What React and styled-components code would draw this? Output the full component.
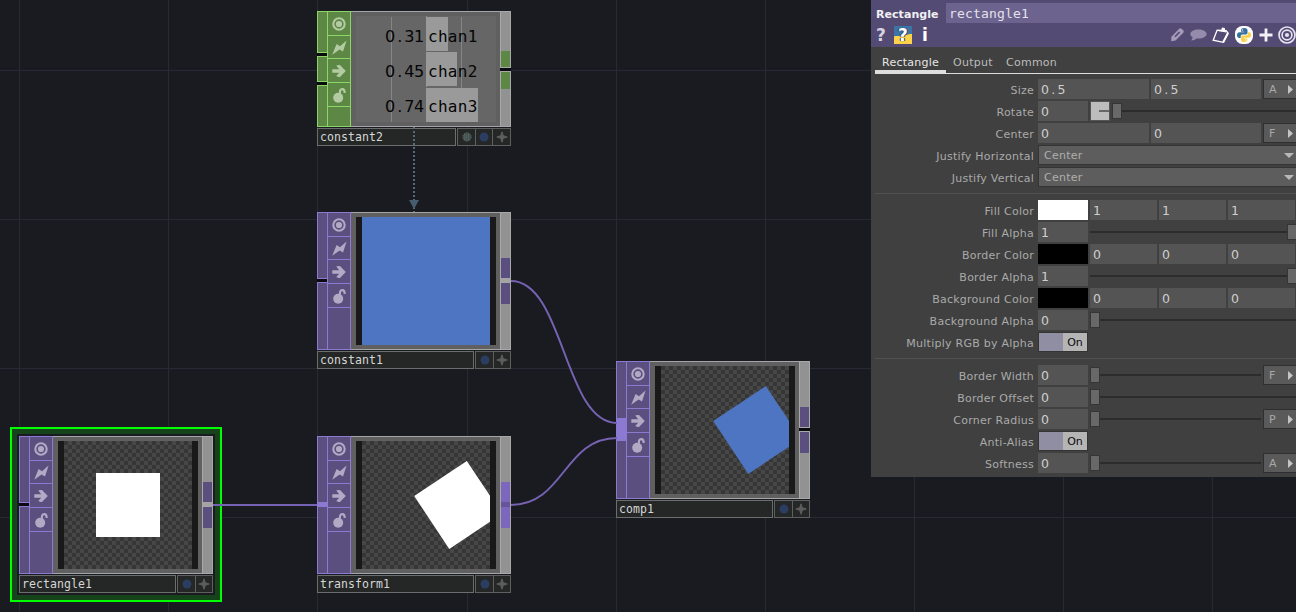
import React from "react";
import styled, { createGlobalStyle, css } from "styled-components";

const GlobalStyle = createGlobalStyle`
  *, *::before, *::after { box-sizing: border-box; }
  html, body { margin: 0; padding: 0; background: #191b20; overflow: hidden; }
`;

const SANS = '"DejaVu Sans", Verdana, sans-serif';
const MONO = '"DejaVu Sans Mono", "Lucida Console", monospace';

const families = {
  top: { fill: "#5b4f80", line: "#8c7ad2", glyph: "#b2a9c4", bright: "#7d66bd" },
  chop: { fill: "#5d8744", line: "#8cd666", glyph: "#b3cba2", bright: "#6fae4a" },
};

/* ---------- network canvas ---------- */

const Network = styled.main`
  position: relative;
  width: 1296px;
  height: 612px;
  overflow: hidden;
  background-color: #191b20;
`;

const Overlay = styled.svg`
  position: absolute;
  inset: 0;
  width: 1296px;
  height: 612px;
  pointer-events: none;
`;

const NodeFrame = styled.section`
  position: absolute;
  left: ${(p) => p.$x}px;
  top: ${(p) => p.$y}px;
  width: 194px;
  display: flex;
  flex-direction: column;
  gap: 1px;
`;

const SelectionFrame = styled.div`
  position: absolute;
  left: 10px;
  top: 427px;
  width: 212px;
  height: 175px;
  padding: 5px;
  border: 2px solid #00ff00;
  background: #15441b;
  background-clip: padding-box;
`;

const SelectionInner = styled.div`
  height: 100%;
  background: #191b20;
`;

const NodeBody = styled.div`
  display: grid;
  grid-template-columns: 10px 24px 149px 11px;
  height: ${(p) => p.$h}px;
`;

const InputStrip = styled.div`
  display: flex;
  flex-direction: column;
`;

const openBorders = { top: "1px 0 0 1px", bottom: "0 0 1px 1px" };

const InputPiece = styled.div`
  height: ${(p) => p.$h}px;
  background: ${(p) => (p.$hot ? p.$c.line : p.$c.fill)};
  border: solid ${(p) => p.$c.line};
  border-width: ${(p) => openBorders[p.$part] || "1px 0 1px 1px"};
`;

const Gap = styled.div`
  height: ${(p) => p.$h}px;
  background: #090a0e;
`;

const FlagColumn = styled.div`
  display: flex;
  flex-direction: column;
  background: ${(p) => p.$c.fill};
  border: 1px solid ${(p) => p.$c.line};
`;

const Flag = styled.div`
  display: flex;
  align-items: center;
  justify-content: center;
  height: ${(p) => p.$h}px;
  border-bottom: 1px solid ${(p) => p.$c.line};
  color: ${(p) => p.$c.glyph};
`;

const ViewerFrame = styled.div`
  padding: 4px 4px 4px 5px;
  background: #606060;
  border: solid #a5a5a5;
  border-width: 1px 0;
`;

const Viewer = styled.div`
  height: 100%;
  padding: 0 6px;
  background: #191919;
`;

const Picture = styled.div`
  width: 128px;
  height: 128px;
  background: ${(p) =>
    p.$solid || "repeating-conic-gradient(#474747 0 25%, #363636 0 50%) 0 0 / 8px 8px"};
`;

const OutputStrip = styled.div`
  display: flex;
  flex-direction: column;
  background: #929292;
  border: 1px solid #a8a8a8;
`;

const OutputPad = styled.div`
  height: ${(p) => p.$h}px;
  margin-top: ${(p) => p.$mt || 0}px;
  background: ${(p) => p.$bg};
`;

const OutputGap = styled.div`
  height: 5px;
  margin: 0 ${(p) => (p.$split ? "-1px" : "0")};
  background: ${(p) => p.$bg};
  ${(p) => p.$split && css`border: solid #a8a8a8; border-width: 1px 0;`}
`;

const NodeFooter = styled.footer`
  display: flex;
  gap: 1px;
  height: 18px;
`;

const NodeName = styled.div`
  flex: 1;
  border: 1px solid #6b6e6f;
  background: #242726;
  padding-left: 2px;
  color: #d6d6d6;
  font: 11.5px/16px ${MONO};
  letter-spacing: 0.08px;
`;

const FooterFlags = styled.div`
  display: flex;
  border: 1px solid #5d605f;
  background: #242726;
`;

const FooterFlag = styled.div`
  display: flex;
  align-items: center;
  justify-content: center;
  width: 17px;
  & + & { border-left: 1px solid #5d605f; }
  & + & + & { width: 18px; }
`;

/* ---------- channel viewer ---------- */

const Channels = styled.div`
  display: flex;
  flex-direction: column;
  height: 106px;
  padding-top: 1px;
  background:
    linear-gradient(#858585, #858585) 35px 1px / 1px 105px no-repeat,
    linear-gradient(#858585, #858585) 105px 1px / 1px 105px no-repeat,
    repeating-linear-gradient(#929292 0 2px, #696969 2px 3px) 70px 0 / 1px 106px no-repeat,
    #666;
`;

const Channel = styled.div`
  display: grid;
  grid-template-columns: 70px 70px;
  height: 35px;
  color: #050505;
`;

const ChannelValue = styled.span`
  padding-right: 2px;
  text-align: right;
  font: 16px/39px ${SANS};
  letter-spacing: -0.3px;
  white-space: nowrap;
`;

const ChannelName = styled.span`
  height: 35px;
  padding-left: 2px;
  font: 16px/39px ${MONO};
  letter-spacing: 0.3px;
  background: linear-gradient(#9a9a9a, #9a9a9a) 0 ${(p) => p.$top}px / ${(p) => p.$w}px 34px no-repeat;
`;

const Point = styled.span`
  padding: 0 2.3px;
`;

function Digits({ children }) {
  const [whole, frac] = children.split(".");
  return frac === undefined ? whole : (
    <>{whole}<Point>.</Point>{frac}</>
  );
}

/* ---------- glyphs ---------- */

const ViewerGlyph = () => (
  <svg width="14" height="14" viewBox="0 0 14 14" fill="none">
    <circle cx="7" cy="7" r="5.7" stroke="currentColor" strokeWidth="2.1" />
    <circle cx="7" cy="7" r="3.1" fill="currentColor" />
  </svg>
);

const BoltGlyph = () => (
  <svg width="15" height="15" viewBox="0 0 15 15">
    <path d="M.2 14.8 4.6 4 8 6.2 14.6.4 11 11.6 7.6 9.4Z" fill="currentColor" />
  </svg>
);

const ArrowGlyph = () => (
  <svg width="14" height="13" viewBox="0 0 14 13">
    <path d="M0.3 5.2H7.2L4.2 1.6 6.6 1H8L13.8 7 8 13H6.6L4.2 12.1 7.2 8.8H0.3Z" fill="currentColor" />
  </svg>
);

const LockGlyph = () => (
  <svg width="14" height="16" viewBox="0 0 14 16">
    <circle cx="6.2" cy="10.8" r="5" fill="currentColor" />
    <path d="M7.9 7.4V4.9C7.9 2.9 9 2.1 10.4 2.1S12.7 3.3 12.7 6.1" fill="none" stroke="currentColor" strokeWidth="2.1" />
  </svg>
);

const DotGlyph = () => (
  <svg width="10" height="10" viewBox="0 0 10 10">
    <circle cx="5" cy="5" r="4.5" fill="#2b3d60" />
  </svg>
);

const HatchGlyph = () => (
  <svg width="10" height="10" viewBox="0 0 10 10">
    <circle cx="5" cy="5" r="4.2" fill="#42504f" stroke="#5b696b" strokeDasharray="1 1" />
    <path d="M2 3H8M2 5H8M2 7H8" stroke="#65736b" strokeDasharray="1 1" />
  </svg>
);

const StarGlyph = () => (
  <svg width="12" height="12" viewBox="0 0 12 12">
    <path d="M6 .8 7.3 4.7 11.3 6 7.3 7.3 6 11.3 4.7 7.3.8 6 4.7 4.7Z" fill="#5d5d5d" stroke="#5d5d5d" />
  </svg>
);

/* ---------- nodes ---------- */

function Inputs({ kind, c }) {
  if (kind === "triple") {
    return (
      <InputStrip>
        <InputPiece $c={c} $h={42} /><Gap $h={3} />
        <InputPiece $c={c} $h={26} /><Gap $h={3} />
        <InputPiece $c={c} $h={42} />
      </InputStrip>
    );
  }
  if (kind === "split") {
    return (
      <InputStrip>
        <InputPiece $c={c} $h={67} /><Gap $h={3} />
        <InputPiece $c={c} $h={68} />
      </InputStrip>
    );
  }
  const [from, to] = kind === "wide" ? [57, 80] : [66, 71];
  return (
    <InputStrip>
      <InputPiece $c={c} $h={from} $part="top" />
      <InputPiece $c={c} $h={to - from} $hot />
      <InputPiece $c={c} $h={138 - to} $part="bottom" />
    </InputStrip>
  );
}

function Node({ x, y, name, family = "top", h = 138, inputs, output, hatch, children }) {
  const c = families[family];
  const small = h < 130;
  const padFill = output === "wired" ? c.bright : c.fill;
  const split = output === "split";
  const gapBg = split ? "#090a0e" : output === "wired" ? "#65549a" : "#a4a4a4";
  return (
    <NodeFrame $x={x} $y={y}>
      <NodeBody $h={h}>
        <Inputs kind={inputs} c={c} />
        <FlagColumn $c={c}>
          <Flag $c={c} $h={24}><ViewerGlyph /></Flag>
          <Flag $c={c} $h={23}><BoltGlyph /></Flag>
          <Flag $c={c} $h={24}><ArrowGlyph /></Flag>
          <Flag $c={c} $h={24}><LockGlyph /></Flag>
        </FlagColumn>
        <ViewerFrame>{children}</ViewerFrame>
        <OutputStrip>
          <OutputPad $mt={small ? 39 : 45} $h={small ? 16 : 20} $bg={padFill} />
          <OutputGap $split={split} $bg={gapBg} />
          <OutputPad $h={small ? 17 : 21} $bg={padFill} />
        </OutputStrip>
      </NodeBody>
      <NodeFooter>
        <NodeName>{name}</NodeName>
        <FooterFlags>
          {hatch && <FooterFlag><HatchGlyph /></FooterFlag>}
          <FooterFlag><DotGlyph /></FooterFlag>
          <FooterFlag><StarGlyph /></FooterFlag>
        </FooterFlags>
      </NodeFooter>
    </NodeFrame>
  );
}

const TiltedSquare = ({ fill }) => (
  <svg width="128" height="128" viewBox="0 0 128 128">
    <path d="M52.2 55 104.8 20 140 72.7 87.3 108Z" fill={fill} />
  </svg>
);

const PlainSquare = () => (
  <svg width="128" height="128" viewBox="0 0 128 128">
    <rect x="32" y="32" width="64" height="64" fill="#fff" />
  </svg>
);

const gridX = [19, 168, 317, 467, 616, 765, 914, 1063, 1212];
const gridY = [70, 219, 368, 517];

/* ---------- parameter panel ---------- */

const Panel = styled.aside`
  position: absolute;
  top: 0;
  right: 0;
  width: 425px;
  height: 477px;
  overflow: hidden;
  background: #404040;
  font-family: ${SANS};
  font-size: 11px;
  color: #aaa;
`;

const PanelHeader = styled.header`
  height: 47px;
  padding-top: 3px;
  background: #544b75;
`;

const TitleRow = styled.div`
  display: flex;
  height: 20px;
  line-height: 23px;
`;

const OpType = styled.div`
  width: 75px;
  padding-left: 5px;
  color: #f0f0f0;
  font-size: 11px;
  font-weight: bold;
  letter-spacing: 0.05px;
`;

const OpName = styled.div`
  flex: 1;
  padding-left: 3px;
  background: #6d638f;
  color: #e4e2ea;
  font: 13px/21px ${MONO};
  letter-spacing: 0.17px;
`;

const IconRow = styled.div`
  display: flex;
  align-items: center;
  justify-content: space-between;
  height: 24px;
  padding-left: 5px;
`;

const IconGroup = styled.div`
  display: flex;
  align-items: center;
  gap: ${(p) => p.$gap}px;
`;

const HelpMark = styled.span`
  width: 10px;
  color: ${(p) => p.$color};
  font: bold 17px/24px ${SANS};
  text-align: center;
`;

const PythonHelp = styled.span`
  display: flex;
  align-items: center;
  justify-content: center;
  width: 18px;
  height: 18px;
  background: linear-gradient(172deg, #3b74a5 0 50%, #fbd24a 52%);
  color: #fff;
  font: bold 17px/18px ${SANS};
  text-shadow: 0 0 1px #34405f, 1px 0 #34405f, -1px 0 #34405f;
`;

const Tabs = styled.nav`
  display: flex;
  height: 27px;
  margin-left: 4px;
  border-bottom: 1px solid #dedede;
`;

const Tab = styled.div`
  width: ${(p) => p.$w}px;
  height: 27px;
  padding-left: 7px;
  line-height: 31px;
  letter-spacing: 0.25px;
  color: ${(p) => (p.$active ? "#e6e6e6" : "#bcbcbc")};
  border-bottom: ${(p) => (p.$active ? "4px solid #dedede" : "0")};
`;

const Page = styled.div`
  display: flex;
  flex-direction: column;
  gap: 2px;
  padding-top: 5px;
`;

const Divider = styled.hr`
  width: 421px;
  height: 1px;
  margin: 4px 0 4px 4px;
  border: 0;
  background: #505050;
`;

const Row = styled.div`
  display: grid;
  grid-template-columns: 163px 1fr;
  column-gap: 4px;
  height: 20px;
`;

const Label = styled.div`
  height: 20px;
  text-align: right;
  line-height: 23px;
  letter-spacing: 0.25px;
  white-space: nowrap;
`;

const Controls = styled.div`
  display: flex;
  gap: 2px;
  height: 20px;
`;

const Field = styled.div`
  width: ${(p) => p.$w}px;
  height: 20px;
  padding-left: 3px;
  background: #545454;
  color: #cfcfcf;
  font: 12.5px/21px ${SANS};
`;

const Swatch = styled.div`
  width: 50px;
  height: 20px;
  background: ${(p) => p.$color};
`;

const Menu = styled.div`
  display: flex;
  flex: 1;
  align-items: center;
  justify-content: space-between;
  height: 20px;
  padding: 0 2px 0 5px;
  border: 1px solid #343436;
  border-right: 0;
  background: #5d5d5d;
  color: #aeaeae;
  line-height: 20px;
  letter-spacing: 0.25px;
`;

const MenuText = styled.span`
  padding-top: 1px;
`;

const UnitMenu = styled.div`
  display: flex;
  align-items: center;
  justify-content: space-between;
  width: 33px;
  height: 20px;
  padding: 0 3px 0 5px;
  border: 1px solid #2f2f33;
  border-right: 0;
  background: #5a5a5a;
  color: #a9a9a9;
`;

const Slider = styled.div`
  display: flex;
  flex: 1;
  align-items: center;
  flex-direction: ${(p) => (p.$end ? "row-reverse" : "row")};
  margin-right: ${(p) => (p.$end ? -1 : 0)}px;
`;

const Handle = styled.div`
  width: 10px;
  height: 16px;
  border: 1px solid #353535;
  background: #686868;
`;

const Track = styled.div`
  flex: 1;
  height: 2px;
  background: #2c2c2e;
`;

const Stepper = styled.div`
  display: flex;
  align-items: center;
  justify-content: flex-end;
  width: 20px;
  height: 20px;
  border: 1px solid #555;
  background: #bdbdbd;
  &::after { content: ""; width: 10px; height: 2px; background: #666; }
`;

const Toggle = styled.div`
  display: grid;
  grid-template-columns: 24px 24px;
  grid-template-rows: 18px;
  height: 20px;
  border: 1px solid #343434;
  background: #b5b5b5;
  color: #0b0b0b;
  line-height: 20px;
  text-align: center;
  &::before { content: ""; background: #8f8ea3; }
`;

const RightCaret = () => (
  <svg width="5" height="9" viewBox="0 0 5 9"><path d="M0 0 5 4.5 0 9Z" fill="#c4c4c4" /></svg>
);
const DownCaret = () => (
  <svg width="10" height="5" viewBox="0 0 10 5"><path d="M0 0H10L5 5Z" fill="#b8b8b8" /></svg>
);

const Pencil = () => (
  <svg width="15" height="16" viewBox="0 0 15 16">
    <path d="M1.2 14.3 1.4 9.8 9.2 1.7Q10.4.8 11.6 1.8L13.4 3.4Q14.2 4.5 13.3 5.7L5.5 13.4Z" fill="#a39bb8" />
    <path d="M5 9.8 9.6 5" stroke="#544b75" strokeWidth="1.6" />
  </svg>
);
const Bubble = () => (
  <svg width="17" height="12" viewBox="0 0 17 12">
    <path d="M8.5.5C13 .5 16.6 2.4 16.6 5S13 9.5 8.5 9.5L6.6 9.4Q4.5 11.4 1.2 11.6L2.8 8.4C1.3 7.6.4 6.4.4 5 .4 2.4 4 .5 8.5.5Z" fill="#958cab" />
  </svg>
);
const Clipboard = () => (
  <svg width="18" height="17" viewBox="0 0 18 17">
    <path d="M5.2 3.1 1.2 13.2 11.2 15.3 16 6 14.2 3.6Z" fill="none" stroke="#fff" strokeWidth="1.3" />
    <path d="M11.2 15.3 16 6" stroke="#fff" strokeWidth="2" />
    <path d="M6.5 4.2 9.2 3 10 .6 12.8 1 13.1 3.3 14.6 5.4Z" fill="#fff" />
  </svg>
);
const Python = () => (
  <svg width="18" height="18" viewBox="0 0 18 18">
    <rect width="18" height="18" rx="7.5" fill="#fff" />
    <path d="M9 2C6.4 2 6 3.1 6 4.3V5.7H9.3V6.3H4.6C3 6.3 2 7.5 2 9.3S3 12 4.4 12H5.7V10.3C5.7 9 6.7 8.4 7.8 8.4H10.8C11.9 8.4 12.5 7.7 12.5 6.7V4.3C12.5 2.8 11.2 2 9 2Z" fill="#376f9d" />
    <path d="M9.2 16C11.8 16 12.3 15 12.3 13.7V12.4H9V11.8H13.6C15.2 11.8 16 10.6 16 8.8S15.2 6.2 13.9 6.2H13V7.5C13 8.8 12 9.4 10.9 9.4H7.8C6.7 9.4 6.1 10 6.1 11V13.7C6.1 15.2 7.2 16 9.2 16Z" fill="#fbd047" />
    <circle cx="7.4" cy="3.9" r=".7" fill="#fff" /><circle cx="10.8" cy="14.1" r=".7" fill="#fff" />
  </svg>
);
const Plus = () => (
  <svg width="14" height="14" viewBox="0 0 14 14"><path d="M7 .5V13.5M.5 7H13.5" stroke="#f3f1f6" strokeWidth="2.8" /></svg>
);
const Target = () => (
  <svg width="18" height="18" viewBox="0 0 18 18" fill="none" stroke="#e6e2ee" strokeWidth="1.7">
    <circle cx="9" cy="9" r="8" /><circle cx="9" cy="9" r="4.9" /><circle cx="9" cy="9" r="2.1" fill="#e6e2ee" stroke="none" />
  </svg>
);

const Unit = ({ children }) => <UnitMenu>{children}<RightCaret /></UnitMenu>;

const Param = ({ label, children }) => (
  <Row><Label>{label}</Label><Controls>{children}</Controls></Row>
);

const SliderParam = ({ label, value, unit, end, stepper }) => (
  <Param label={label}>
    <Field $w={50}>{value}</Field>
    {stepper && <Stepper />}
    <Slider $end={end}><Handle /><Track /></Slider>
    {unit && <Unit>{unit}</Unit>}
  </Param>
);

const PairParam = ({ label, value, unit }) => (
  <Param label={label}>
    <Field $w={111}><Digits>{value}</Digits></Field>
    <Field $w={110}><Digits>{value}</Digits></Field>
    <Unit>{unit}</Unit>
  </Param>
);

const ColorParam = ({ label, color, value }) => (
  <Param label={label}>
    <Swatch $color={color} />
    <Field $w={67}>{value}</Field>
    <Field $w={67}>{value}</Field>
    <Field $w={67}>{value}</Field>
  </Param>
);

const MenuParam = ({ label, value }) => (
  <Param label={label}><Menu><MenuText>{value}</MenuText><DownCaret /></Menu></Param>
);

const ToggleParam = ({ label }) => (
  <Param label={label}><Toggle>On</Toggle></Param>
);

export default function App() {
  return (
    <>
      <GlobalStyle />
      <Network>
        <Overlay>
          {gridX.map((x) => <path key={x} d={`M${x + 0.5} 0V612`} stroke="#272a34" />)}
          {gridY.map((y) => <path key={y} d={`M0 ${y + 0.5}H1296`} stroke="#272a34" />)}
        </Overlay>
        <SelectionFrame><SelectionInner /></SelectionFrame>

        <Node x={317} y={11} h={116} name="constant2" family="chop" inputs="triple" output="split" hatch>
          <Channels>
            <Channel><ChannelValue><Digits>0.31</Digits></ChannelValue><ChannelName $w={22} $top={0}>chan1</ChannelName></Channel>
            <Channel><ChannelValue><Digits>0.45</Digits></ChannelValue><ChannelName $w={31} $top={0}>chan2</ChannelName></Channel>
            <Channel><ChannelValue><Digits>0.74</Digits></ChannelValue><ChannelName $w={52} $top={1}>chan3</ChannelName></Channel>
          </Channels>
        </Node>
        <Node x={317} y={212} name="constant1" inputs="split">
          <Viewer><Picture $solid="#4e75c1" /></Viewer>
        </Node>
        <Node x={19} y={436} name="rectangle1" inputs="split">
          <Viewer><Picture><PlainSquare /></Picture></Viewer>
        </Node>
        <Node x={317} y={436} name="transform1" inputs="single" output="wired">
          <Viewer><Picture><TiltedSquare fill="#fff" /></Picture></Viewer>
        </Node>
        <Node x={616} y={361} name="comp1" inputs="wide" output="split">
          <Viewer><Picture><TiltedSquare fill="#4e75c1" /></Picture></Viewer>
        </Node>

        <Overlay fill="none">
          <path d="M213 505H317" stroke="#7662b2" strokeWidth="2" />
          <path d="M511 281C564 281 564 423 617 423" stroke="#7662b2" strokeWidth="2" />
          <path d="M511 505C564 505 564 438 617 438" stroke="#7662b2" strokeWidth="2" />
          <path d="M414 127V212" stroke="#596a77" strokeWidth="2" strokeDasharray="2 2" />
          <path d="M409 200H419L414 209Z" fill="#465d70" />
        </Overlay>

        <Panel>
          <PanelHeader>
            <TitleRow><OpType>Rectangle</OpType><OpName>rectangle1</OpName></TitleRow>
            <IconRow>
              <IconGroup $gap={8}>
                <HelpMark $color="#d6d2e0">?</HelpMark>
                <PythonHelp>?</PythonHelp>
                <HelpMark $color="#fff">i</HelpMark>
              </IconGroup>
              <IconGroup $gap={5.3}>
                <Pencil /><Bubble /><Clipboard /><Python /><Plus /><Target />
              </IconGroup>
            </IconRow>
          </PanelHeader>
          <Tabs>
            <Tab $w={71} $active>Rectangle</Tab>
            <Tab $w={53}>Output</Tab>
            <Tab $w={70}>Common</Tab>
          </Tabs>
          <Page>
            <PairParam label="Size" value="0.5" unit="A" />
            <SliderParam label="Rotate" value="0" stepper />
            <PairParam label="Center" value="0" unit="F" />
            <MenuParam label="Justify Horizontal" value="Center" />
            <MenuParam label="Justify Vertical" value="Center" />
            <Divider />
            <ColorParam label="Fill Color" color="#fff" value="1" />
            <SliderParam label="Fill Alpha" value="1" end />
            <ColorParam label="Border Color" color="#000" value="0" />
            <SliderParam label="Border Alpha" value="1" end />
            <ColorParam label="Background Color" color="#000" value="0" />
            <SliderParam label="Background Alpha" value="0" />
            <ToggleParam label="Multiply RGB by Alpha" />
            <Divider />
            <SliderParam label="Border Width" value="0" unit="F" />
            <SliderParam label="Border Offset" value="0" />
            <SliderParam label="Corner Radius" value="0" unit="P" />
            <ToggleParam label="Anti-Alias" />
            <SliderParam label="Softness" value="0" unit="A" />
          </Page>
        </Panel>
      </Network>
    </>
  );
}
